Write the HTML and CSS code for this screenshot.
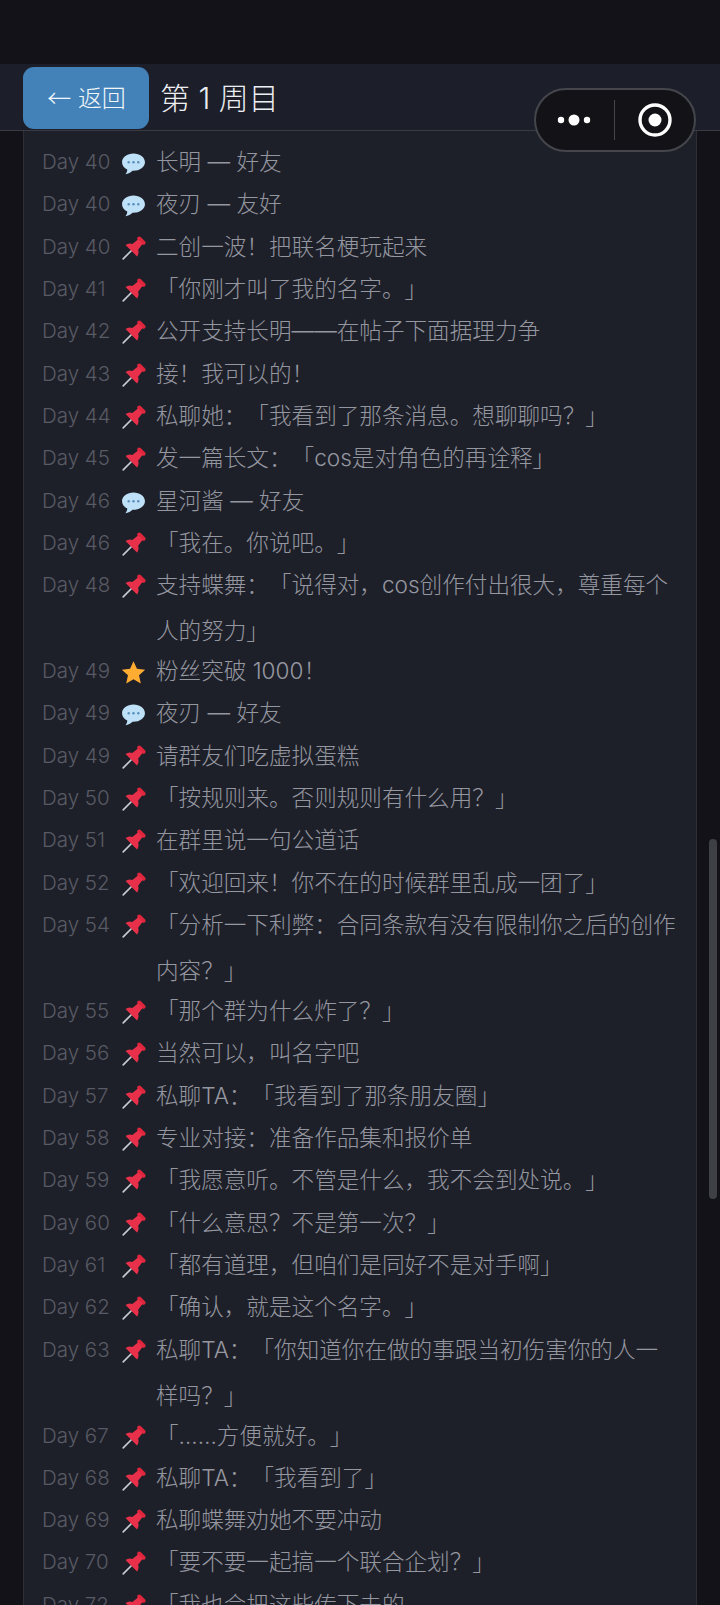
FILE: index.html
```html
<!DOCTYPE html>
<html lang="zh-CN">
<head>
  <meta charset="UTF-8" />
  <meta name="viewport" content="width=device-width, initial-scale=1.0" />
  <title>第 1 周目</title>
  <link rel="stylesheet" href="styles.css">
</head>

<body>
  <svg class="defs" width="0" height="0" aria-hidden="true">
    <symbol id="pin" viewBox="0 0 24 24">
      <g transform="rotate(45 12 12)">
        <line x1="12" y1="14" x2="12" y2="26" stroke="#c6ccd2" stroke-width="1.6" stroke-linecap="round" />
        <rect x="7.2" y="-0.6" width="9.6" height="3.8" rx="1.900" fill="#e0263c" />
        <path d="M9 2.500h6l.9 7.200q3.400 1.600 3.900 5.300H4.200q.5-3.700 3.900-5.300z" fill="#e8304a" />
      </g>
    </symbol>
    <symbol id="chat" viewBox="0 0 24 24">
      <path d="M12 2.500C5.900 2.500 1 6.100 1 10.800c0 3 2 5.600 5 7 .1 1.600-.7 3.300-1.800 4.500 2.700-.3 5.200-1.700 6.800-3.300h1c6.100 0 11-3.600 11-8.200S18.100 2.500 12 2.500z" fill="#bfe1f8" />
      <circle cx="7.400" cy="10.800" r="1.200" fill="#5b8fbc" />
      <circle cx="12" cy="10.800" r="1.200" fill="#5b8fbc" />
      <circle cx="16.600" cy="10.800" r="1.200" fill="#5b8fbc" />
    </symbol>
    <symbol id="star" viewBox="0 0 24 24">
      <path d="M12 1.200l3.300 7.300 7.900.9-5.900 5.300 1.700 7.900-7-4.100-7 4.100 1.700-7.900L.8 9.400l7.900-.9z" fill="#ffac33" />
    </symbol>
  </svg>

  <div class="status"></div>

  <header class="topbar">
    <button class="back"><span class="arrow">←</span> 返回</button>
    <h1 class="title">第 1 周目</h1>
  </header>

  <div class="capsule">
    <svg class="capsule-dots" width="36" height="12" viewBox="0 0 36 12">
      <circle cx="5" cy="6" r="3.200" fill="#fff" />
      <circle cx="18" cy="6" r="5.500" fill="#fff" />
      <circle cx="31" cy="6" r="3.200" fill="#fff" />
    </svg>
    <span class="capsule-line"></span>
    <svg class="capsule-target" width="34" height="34" viewBox="0 0 34 34">
      <circle cx="17" cy="17" r="15" fill="none" stroke="#fff" stroke-width="3.400" />
      <circle cx="17" cy="17" r="6.500" fill="#fff" />
    </svg>
  </div>

  <main class="card">
    <div class="row"><span class="day">Day 40</span><svg class="icon"><use href="#chat" /></svg><span class="text">长明 — 好友</span></div>
    <div class="row"><span class="day">Day 40</span><svg class="icon"><use href="#chat" /></svg><span class="text">夜刃 — 友好</span></div>
    <div class="row"><span class="day">Day 40</span><svg class="icon"><use href="#pin" /></svg><span class="text">二创一波！把联名梗玩起来</span></div>
    <div class="row"><span class="day">Day 41</span><svg class="icon"><use href="#pin" /></svg><span class="text">「你刚才叫了我的名字。」</span></div>
    <div class="row"><span class="day">Day 42</span><svg class="icon"><use href="#pin" /></svg><span class="text">公开支持长明——在帖子下面据理力争</span></div>
    <div class="row"><span class="day">Day 43</span><svg class="icon"><use href="#pin" /></svg><span class="text">接！我可以的！</span></div>
    <div class="row"><span class="day">Day 44</span><svg class="icon"><use href="#pin" /></svg><span class="text">私聊她：「我看到了那条消息。想聊聊吗？」</span></div>
    <div class="row"><span class="day">Day 45</span><svg class="icon"><use href="#pin" /></svg><span class="text">发一篇长文：「cos是对角色的再诠释」</span></div>
    <div class="row"><span class="day">Day 46</span><svg class="icon"><use href="#chat" /></svg><span class="text">星河酱 — 好友</span></div>
    <div class="row"><span class="day">Day 46</span><svg class="icon"><use href="#pin" /></svg><span class="text">「我在。你说吧。」</span></div>
    <div class="row row-wrap"><span class="day">Day 48</span><svg class="icon"><use href="#pin" /></svg><span class="text">支持蝶舞：「说得对，cos创作付出很大，尊重每个人的努力」</span></div>
    <div class="row"><span class="day">Day 49</span><svg class="icon"><use href="#star" /></svg><span class="text">粉丝突破 1000！</span></div>
    <div class="row"><span class="day">Day 49</span><svg class="icon"><use href="#chat" /></svg><span class="text">夜刃 — 好友</span></div>
    <div class="row"><span class="day">Day 49</span><svg class="icon"><use href="#pin" /></svg><span class="text">请群友们吃虚拟蛋糕</span></div>
    <div class="row"><span class="day">Day 50</span><svg class="icon"><use href="#pin" /></svg><span class="text">「按规则来。否则规则有什么用？」</span></div>
    <div class="row"><span class="day">Day 51</span><svg class="icon"><use href="#pin" /></svg><span class="text">在群里说一句公道话</span></div>
    <div class="row"><span class="day">Day 52</span><svg class="icon"><use href="#pin" /></svg><span class="text">「欢迎回来！你不在的时候群里乱成一团了」</span></div>
    <div class="row row-wrap"><span class="day">Day 54</span><svg class="icon"><use href="#pin" /></svg><span class="text">「分析一下利弊：合同条款有没有限制你之后的创作内容？」</span></div>
    <div class="row"><span class="day">Day 55</span><svg class="icon"><use href="#pin" /></svg><span class="text">「那个群为什么炸了？」</span></div>
    <div class="row"><span class="day">Day 56</span><svg class="icon"><use href="#pin" /></svg><span class="text">当然可以，叫名字吧</span></div>
    <div class="row"><span class="day">Day 57</span><svg class="icon"><use href="#pin" /></svg><span class="text">私聊TA：「我看到了那条朋友圈」</span></div>
    <div class="row"><span class="day">Day 58</span><svg class="icon"><use href="#pin" /></svg><span class="text">专业对接：准备作品集和报价单</span></div>
    <div class="row"><span class="day">Day 59</span><svg class="icon"><use href="#pin" /></svg><span class="text">「我愿意听。不管是什么，我不会到处说。」</span></div>
    <div class="row"><span class="day">Day 60</span><svg class="icon"><use href="#pin" /></svg><span class="text">「什么意思？不是第一次？」</span></div>
    <div class="row"><span class="day">Day 61</span><svg class="icon"><use href="#pin" /></svg><span class="text">「都有道理，但咱们是同好不是对手啊」</span></div>
    <div class="row"><span class="day">Day 62</span><svg class="icon"><use href="#pin" /></svg><span class="text">「确认，就是这个名字。」</span></div>
    <div class="row row-wrap"><span class="day">Day 63</span><svg class="icon"><use href="#pin" /></svg><span class="text">私聊TA：「你知道你在做的事跟当初伤害你的人一样吗？」</span></div>
    <div class="row"><span class="day">Day 67</span><svg class="icon"><use href="#pin" /></svg><span class="text">「……方便就好。」</span></div>
    <div class="row"><span class="day">Day 68</span><svg class="icon"><use href="#pin" /></svg><span class="text">私聊TA：「我看到了」</span></div>
    <div class="row"><span class="day">Day 69</span><svg class="icon"><use href="#pin" /></svg><span class="text">私聊蝶舞劝她不要冲动</span></div>
    <div class="row"><span class="day">Day 70</span><svg class="icon"><use href="#pin" /></svg><span class="text">「要不要一起搞一个联合企划？」</span></div>
    <div class="row"><span class="day">Day 72</span><svg class="icon"><use href="#pin" /></svg><span class="text">「我也会把这些传下去的，</span></div>
  </main>

  <div class="scrollbar"></div>
</body>
</html>
```

FILE: styles.css
```css
html, body {
  margin: 0;
  height: 1605px;
  overflow: hidden;
}
body {
  background: #121218;
  color: #9597a0;
  font-family: Inter, "Noto Sans CJK SC", sans-serif;
  text-spacing-trim: space-all;
  position: relative;
}
.defs {
  position: absolute;
}
.status {
  height: 64px;
  background: #121218;
}
.topbar {
  height: 67px;
  box-sizing: border-box;
  padding: 3px 23px 2px;
  display: flex;
  align-items: flex-start;
  gap: 11px;
  background: #1c1f29;
  border-bottom: 1px solid #383b44;
}
.back {
  width: 126px;
  height: 62px;
  padding: 0 0 3px 1px;
  background: #4382b9;
  color: #f2f6fa;
  border: none;
  border-radius: 11px;
  font-family: inherit;
  font-size: 24px;
  font-weight: 300;
}
.arrow {
  font-family: "Noto Sans CJK SC", sans-serif;
}
.title {
  margin: 0;
  color: #eceef2;
  font-size: 30px;
  font-weight: 300;
  line-height: 62px;
}
.capsule {
  position: absolute;
  left: 534px;
  top: 88px;
  width: 162px;
  height: 64px;
  box-sizing: border-box;
  border: 2px solid #45464c;
  border-radius: 32px;
  background: #121217;
  display: flex;
  align-items: center;
}
.capsule-dots {
  margin-left: 20px;
}
.capsule-line {
  width: 1px;
  height: 40px;
  margin-left: 22px;
  background: #45464c;
}
.capsule-target {
  margin-left: 23px;
}
.card {
  margin: 0 23px;
  padding: 8px 19px 8px 18px;
  background: #1e2029;
  border-left: 1px solid #2d2f38;
  border-right: 1px solid #2d2f38;
  font-size: 22.6px;
  font-weight: 300;
}
.row {
  display: flex;
  margin-bottom: -3.7px;
  line-height: 46px;
}
.row-wrap {
  margin-bottom: -6px;
}
.day {
  width: 79px;
  flex-shrink: 0;
  color: #585a64;
  font-size: 20.500px;
}
.icon {
  width: 25px;
  height: 25px;
  margin: 12px 10px 0 0;
  flex-shrink: 0;
}
.text {
  flex: 1;
}
.scrollbar {
  position: absolute;
  left: 709px;
  top: 839px;
  width: 8px;
  height: 360px;
  border-radius: 4px;
  background: #3f4045;
}
```
